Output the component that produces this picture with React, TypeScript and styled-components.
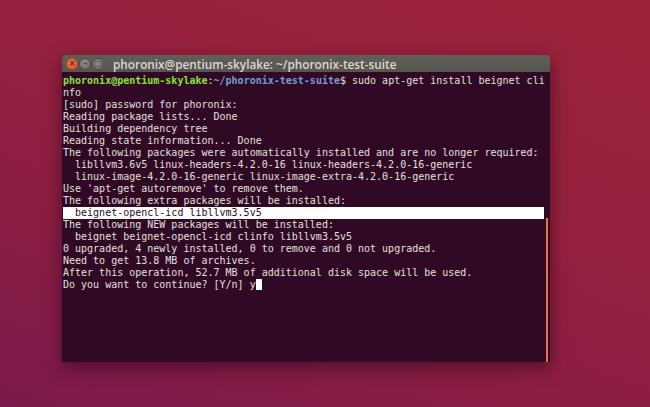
import styled, { createGlobalStyle } from "styled-components"

const Global = createGlobalStyle`
    html, body {
        margin: 0;
        padding: 0;
    }
    body {
        width: 650px;
        height: 407px;
        overflow: hidden;
    }
`

const Desktop = styled.div`
    width: 650px;
    height: 407px;
    box-sizing: border-box;
    padding: 55px 0 0 62px;
    background: linear-gradient(200deg, #9c223a 0%, #94203f 45%, #7d1a4b 100%);
`
const Window = styled.div`
    width: 488px;
    height: 307px;
    display: flex;
    flex-direction: column;
    border-radius: 4px 4px 0 0;
    overflow: hidden;
    box-shadow: 0 6px 18px rgba(40, 0, 20, 0.55);
`
const TitleBar = styled.div`
    height: 17px;
    flex: none;
    display: flex;
    align-items: center;
    padding-left: 4px;
    background: linear-gradient(#5f5e59, #56554f);
    font-family: "Open Sans", "DejaVu Sans", sans-serif;
    font-size: 11.8px;
    font-weight: 600;
    color: #dcd8cf;
`
const Buttons = styled.div`
    display: flex;
    gap: 1px;
    margin-right: 9px;
`
const Dot = styled.span<{ $close?: boolean }>`
    width: 10px;
    height: 10px;
    border-radius: 50%;
    background: ${p => p.$close ? 'radial-gradient(circle at 40% 35%, #f47a4c, #d9532b)' : 'radial-gradient(circle at 40% 35%, #8c8a84, #6f6d67)'};
    border: 1px solid ${p => p.$close ? '#b8451f' : '#4c4b46'};
    display: flex;
    align-items: center;
    justify-content: center;
    font-family: "DejaVu Sans", sans-serif;
    font-size: 8px;
    font-weight: bold;
    line-height: 1;
    color: ${p => p.$close ? '#5a1d0b' : '#4a4944'};
`
const Body = styled.div`
    flex: 1;
    display: flex;
    background: #300a24;
`
const Screen = styled.pre`
    flex: 1;
    margin: 0;
    padding: 3px 0 0 1px;
    font-family: "DejaVu Sans Mono", "Liberation Mono", monospace;
    font-size: 10px;
    line-height: 12px;
    color: #e2e0dc;
    white-space: pre;
`
const Line = styled.div<{ $sel?: boolean }>`
    height: 12px;
    width: 481px;
    background: ${p => p.$sel ? '#ffffff' : 'transparent'};
    color: ${p => p.$sel ? '#300a24' : 'inherit'};
`
const User = styled.span`
    color: #8ae234;
    font-weight: bold;
`
const Path = styled.span`
    color: #729fcf;
    font-weight: bold;
`
const Cursor = styled.span`
    display: inline-block;
    width: 6px;
    height: 11px;
    vertical-align: -2px;
    background: #ffffff;
`
const Track = styled.div`
    width: 4px;
    display: flex;
    flex-direction: column;
    justify-content: flex-end;
`
const Thumb = styled.div`
    width: 2px;
    height: 144px;
    background: #e8734a;
`

const output = [
    "nfo",
    "[sudo] password for phoronix:",
    "Reading package lists... Done",
    "Building dependency tree",
    "Reading state information... Done",
    "The following packages were automatically installed and are no longer required:",
    "  libllvm3.6v5 linux-headers-4.2.0-16 linux-headers-4.2.0-16-generic",
    "  linux-image-4.2.0-16-generic linux-image-extra-4.2.0-16-generic",
    "Use 'apt-get autoremove' to remove them.",
    "The following extra packages will be installed:",
]
const output2 = [
    "The following NEW packages will be installed:",
    "  beignet beignet-opencl-icd clinfo libllvm3.5v5",
    "0 upgraded, 4 newly installed, 0 to remove and 0 not upgraded.",
    "Need to get 13.8 MB of archives.",
    "After this operation, 52.7 MB of additional disk space will be used.",
]

export default function App(){
    return(
        <Desktop>
            <Global/>
            <Window>
                <TitleBar>
                    <Buttons>
                        <Dot $close>×</Dot>
                        <Dot>–</Dot>
                        <Dot>□</Dot>
                    </Buttons>
                    phoronix@pentium-skylake: ~/phoronix-test-suite
                </TitleBar>
                <Body>
                    <Screen>
                        <Line><User>phoronix@pentium-skylake</User>:<Path>~/phoronix-test-suite</Path>$ sudo apt-get install beignet cli</Line>
                        {output.map((l, i) => <Line key={i}>{l}</Line>)}
                        <Line $sel>{"  beignet-opencl-icd libllvm3.5v5"}</Line>
                        {output2.map((l, i) => <Line key={'b' + i}>{l}</Line>)}
                        <Line>Do you want to continue? [Y/n] y<Cursor/></Line>
                    </Screen>
                    <Track>
                        <Thumb/>
                    </Track>
                </Body>
            </Window>
        </Desktop>
    )
}
